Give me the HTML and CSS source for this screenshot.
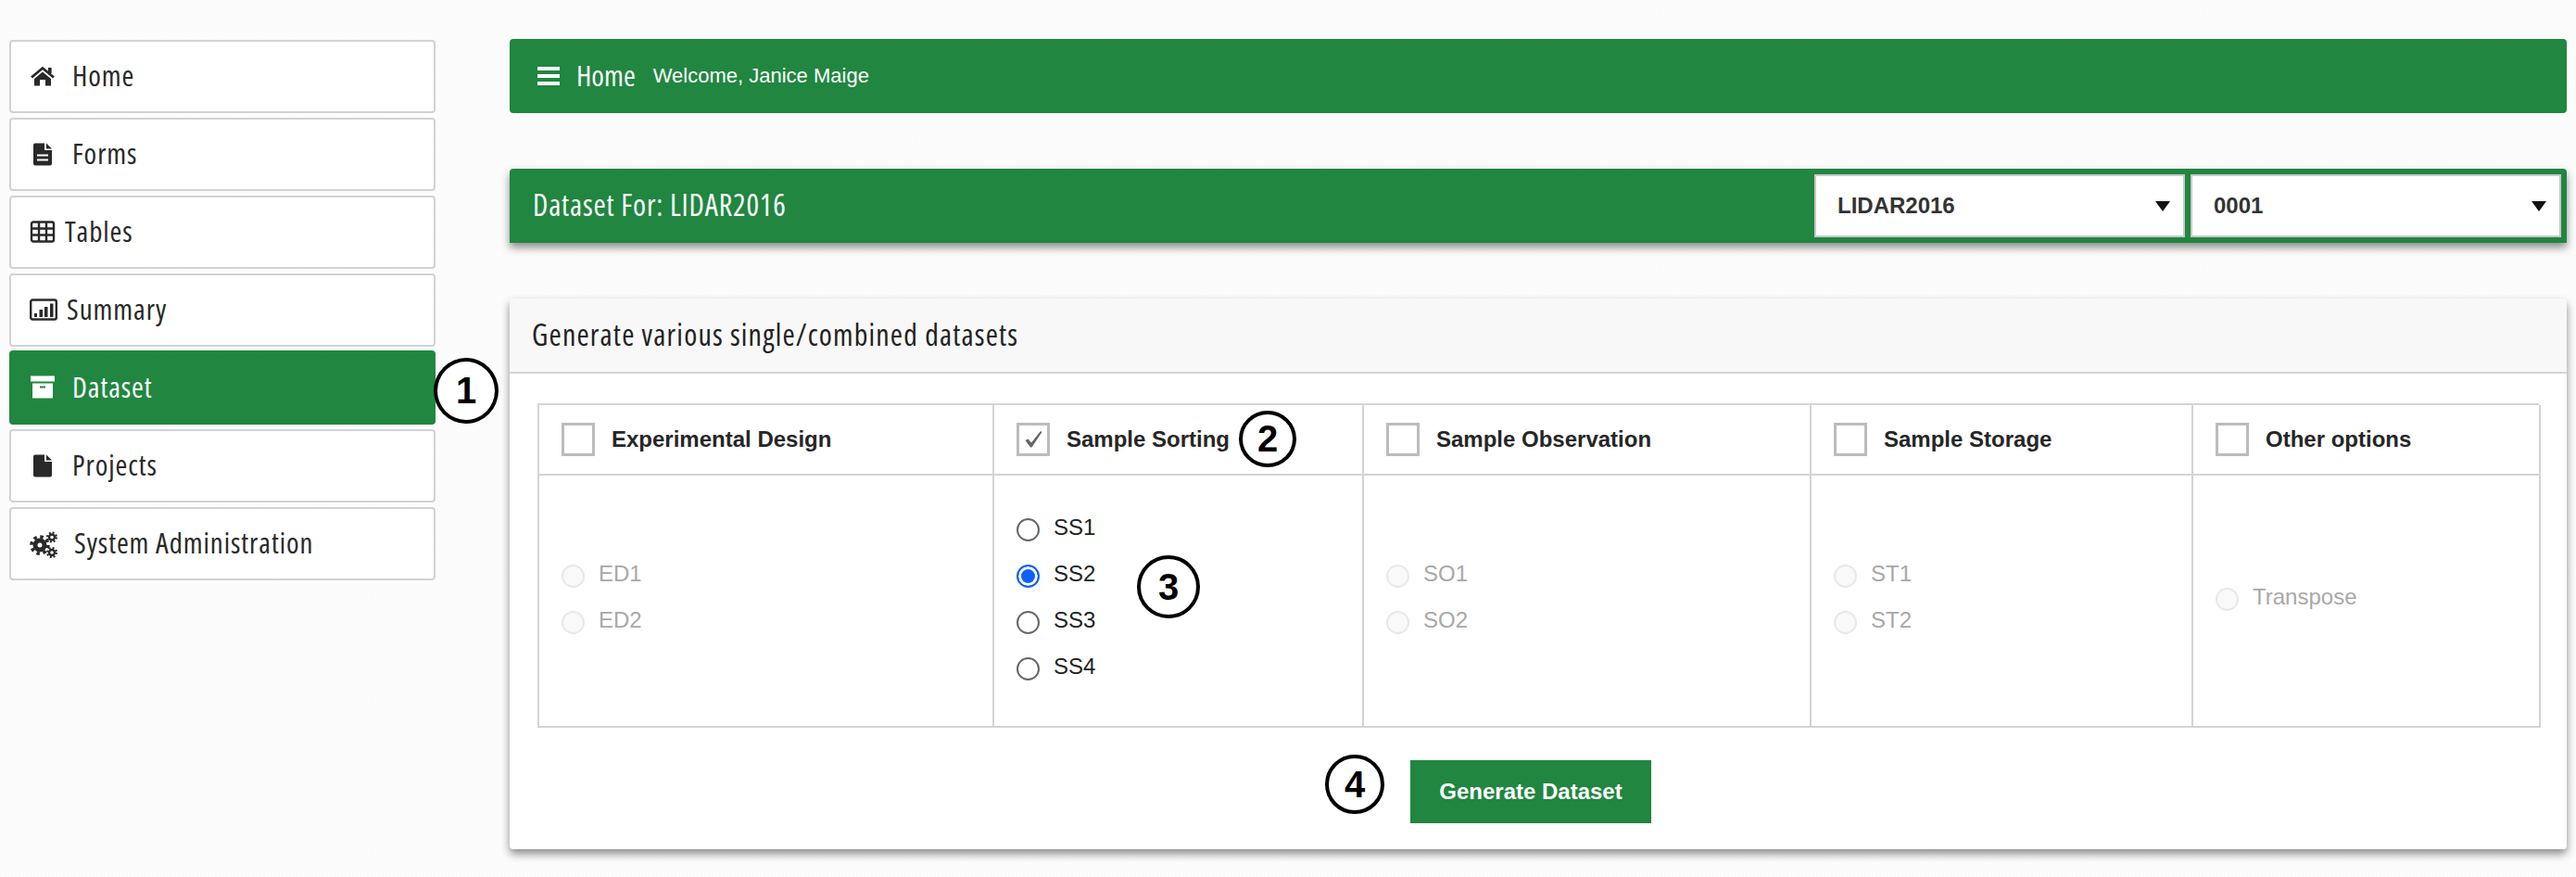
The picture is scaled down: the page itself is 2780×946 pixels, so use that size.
FILE: index.html
```html
<!DOCTYPE html>
<html lang="en">
<head>
<meta charset="utf-8">
<title>Dataset</title>
<link rel="stylesheet" href="styles.css">
</head>
<body>
<nav class="sidebar">
  <a class="nav-item"><svg class="ic w48" viewBox="0 0 48 32"><path class="line" d="M2 16.5L14 6.5 26 16.5"/><rect x="20" y="6" width="3.6" height="6"/><path d="M5 18L14 10.5 23 18V25.5H17V19H11V25.5H5Z"/></svg><span class="cond">Home</span></a>
  <a class="nav-item"><svg class="ic w48" viewBox="0 0 48 32"><path fill-rule="evenodd" d="M6 3.5H16V11H24V25.5A2 2 0 0 1 22 27.5H6A2 2 0 0 1 4 25.5V5.5A2 2 0 0 1 6 3.5ZM8 15.5V17.5H20V15.5ZM8 20.5V22.5H20V20.5Z"/><path d="M18 3.5L24 9.5H18Z"/></svg><span class="cond">Forms</span></a>
  <a class="nav-item"><svg class="ic w40" viewBox="0 0 40 32"><rect class="line thin" x="2" y="4.5" width="24" height="21" rx="2"/><path class="line thin" d="M10 4.5V25.5M18 4.5V25.5M2 11.5H26M2 18.5H26"/></svg><span class="cond">Tables</span></a>
  <a class="nav-item"><svg class="ic w42" viewBox="0 0 42 32"><rect class="line thin" x="1.2" y="4.5" width="27.6" height="21" rx="2"/><path d="M5 19H8V23H5ZM10.5 15H14V23H10.5ZM16 12H19.500V23H16ZM22 8.500H25.500V23H22Z"/></svg><span class="cond">Summary</span></a>
  <a class="nav-item active"><svg class="ic w48" viewBox="0 0 48 32"><rect class="light" x="1" y="3.500" width="26" height="6"/><path class="light" fill-rule="evenodd" d="M3 11.500H25V27.500H3ZM11 14.500V16.500H17V14.500Z"/></svg><span class="cond">Dataset</span></a>
  <a class="nav-item"><svg class="ic w48" viewBox="0 0 48 32"><path d="M6 3.500H16V11H24V25.500A2 2 0 0 1 22 27.500H6A2 2 0 0 1 4 25.500V5.500A2 2 0 0 1 6 3.500Z"/><path d="M18 3.500L24 9.500H18Z"/></svg><span class="cond">Projects</span></a>
  <a class="nav-item"><svg class="ic w50" viewBox="0 0 50 32"><circle class="line ring-l" cx="11" cy="17" r="5"/><circle class="line teeth-l" cx="11" cy="17" r="9"/><circle class="line ring-s" cx="24" cy="8.500" r="3"/><circle class="line teeth-s" cx="24" cy="8.500" r="5"/><circle class="line ring-s" cx="24" cy="25" r="3"/><circle class="line teeth-s" cx="24" cy="25" r="5"/></svg><span class="cond">System Administration</span></a>
</nav>

<main class="main">
  <header class="bar">
    <svg class="burger" viewBox="0 0 24 20"><path d="M0 0H24V4H0ZM0 8H24V12H0ZM0 16H24V20H0Z"/></svg>
    <span class="bar-title cond">Home</span>
    <span class="welcome">Welcome, Janice Maige</span>
  </header>

  <section class="bar bar-raised">
    <h1 class="bar-heading cond wide">Dataset For: LIDAR2016</h1>
    <div class="select"><span>LIDAR2016</span><svg class="caret" viewBox="0 0 16 11"><path d="M0 0H16L8 11Z"/></svg></div>
    <div class="select"><span>0001</span><svg class="caret" viewBox="0 0 16 11"><path d="M0 0H16L8 11Z"/></svg></div>
  </section>

  <section class="card">
    <h2 class="card-head cond wide">Generate various single/combined datasets</h2>
    <div class="card-body">
      <div class="options">
        <div class="cell head"><span class="box"></span><b>Experimental Design</b></div>
        <div class="cell head"><span class="box"><svg class="tick" viewBox="0 0 20 20"><path d="M1.500 11L4.500 9.500 8 13.500 18 1 19.500 2 8.500 18.500H7Z"/></svg></span><b>Sample Sorting</b></div>
        <div class="cell head"><span class="box"></span><b>Sample Observation</b></div>
        <div class="cell head"><span class="box"></span><b>Sample Storage</b></div>
        <div class="cell head"><span class="box"></span><b>Other options</b></div>

        <div class="cell radios off"><label><i class="radio"></i>ED1</label><label><i class="radio"></i>ED2</label></div>
        <div class="cell radios"><label><i class="radio"></i>SS1</label><label><i class="radio on"></i>SS2</label><label><i class="radio"></i>SS3</label><label><i class="radio"></i>SS4</label></div>
        <div class="cell radios off"><label><i class="radio"></i>SO1</label><label><i class="radio"></i>SO2</label></div>
        <div class="cell radios off"><label><i class="radio"></i>ST1</label><label><i class="radio"></i>ST2</label></div>
        <div class="cell radios off"><label><i class="radio"></i>Transpose</label></div>
      </div>
      <div class="actions"><button class="generate">Generate Dataset</button></div>
    </div>
  </section>
</main>

<span class="mark mark-1">1</span>
<span class="mark mark-2">2</span>
<span class="mark mark-3">3</span>
<span class="mark mark-4">4</span>
</body>
</html>
```

FILE: styles.css
```css
* { box-sizing: border-box; }
html, body { margin: 0; height: 946px; overflow: hidden; }
body {
  position: relative;
  display: flex;
  align-items: flex-start;
  padding-left: 10px;
  font-family: "Liberation Sans", Arial, sans-serif;
  color: #222;
  background: conic-gradient(#fdfdfd 25%, #fafafa 0 50%, #fdfdfd 0 75%, #fafafa 0) 0 0 / 4px 4px;
}
.cond { font-family: "Open Sans", sans-serif; font-stretch: 75%; padding-bottom: 3px; }
.wide { font-stretch: 80%; letter-spacing: .8px; }
.sidebar {
  flex: none;
  width: 460px;
  margin-top: 43px;
  display: flex;
  flex-direction: column;
  gap: 5px;
}
.nav-item {
  height: 79px;
  display: flex;
  align-items: center;
  padding-left: 20px;
  background: #fff;
  border: 2px solid #d2d2d2;
  border-radius: 4px;
  font-size: 31px;
  letter-spacing: .9px;
  color: #292929;
}
.nav-item.active { background: #208640; border-color: #208640; color: #fff; height: 80px; margin-top: -1px; }
.ic { flex: none; height: 32px; margin-right: -2px; fill: #292929; }
.w48 { width: 48px; }
.w40 { width: 40px; }
.w42 { width: 42px; }
.w50 { width: 50px; }
.line { fill: none; stroke: #292929; stroke-width: 2.8; }
.thin { stroke-width: 2.4; }
.light { fill: #fff; }
.ring-l { stroke-width: 5; }
.teeth-l { stroke-width: 3.6; stroke-dasharray: 3.5 3.57; }
.ring-s { stroke-width: 2.4; }
.teeth-s { stroke-width: 2; stroke-dasharray: 2 1.93; }

.main { flex: none; width: 2220px; margin-left: 80px; margin-top: 42px; }
.bar {
  height: 80px;
  display: flex;
  align-items: center;
  padding: 0 6px 0 30px;
  background: #208640;
  border-radius: 4px;
  color: #fff;
}
.burger { width: 24px; height: 20px; fill: #fff; margin-right: 18px; }
.bar-title { font-size: 31px; margin-right: 19px; }
.welcome { font-size: 22px; }
.bar-raised {
  margin-top: 60px;
  padding-left: 25px;
  gap: 6px;
  border-radius: 4px 4px 0 0;
  box-shadow: 0 5px 10px rgba(0, 0, 0, .45);
}
.bar-heading {
  margin: 0 auto 0 0;
  font-size: 32px;
  font-weight: 400;
}
.select {
  width: 400px;
  height: 68px;
  display: flex;
  align-items: center;
  justify-content: space-between;
  padding: 0 14px 0 23px;
  background: #fff;
  border: 2px solid #c8c8c8;
  color: #333;
  font-size: 24px;
  font-weight: 700;
}
.caret { width: 16px; height: 11px; fill: #111; }

.card {
  margin-top: 60px;
  height: 594px;
  background: #fff;
  border-radius: 4px;
  box-shadow: 0 5px 10px rgba(0, 0, 0, .45);
}
.card-head {
  height: 81px;
  margin: 0;
  padding: 0 24px 3px;
  display: flex;
  align-items: center;
  background: #f8f8f8;
  border-bottom: 2px solid #d6d6d6;
  border-radius: 4px 4px 0 0;
  font-size: 32px;
  font-weight: 400;
  letter-spacing: 1.15px;
}
.card-body { padding: 32px 30px 0; }
.options {
  display: grid;
  grid-template-columns: 491px 399px 483px 412px 375px;
  grid-template-rows: 76px 272px;
  border: solid #d4d4d4;
  border-width: 2px 0 0 2px;
}
.cell { border: solid #d4d4d4; border-width: 0 2px 2px 0; padding-left: 24px; }
.head { display: flex; align-items: center; gap: 18px; font-size: 24px; color: #262626; }
.box {
  flex: none;
  width: 36px;
  height: 36px;
  display: flex;
  align-items: center;
  justify-content: center;
  border: 3px solid #bcbcbc;
}
.tick { width: 20px; height: 20px; fill: #666; }
.radios { display: flex; flex-direction: column; justify-content: center; gap: 25px; padding-bottom: 4px; }
.radios label { display: flex; align-items: flex-start; gap: 15px; height: 25px; font-size: 24px; line-height: 19px; color: #222; }
.radio { flex: none; width: 25px; height: 25px; border: 2px solid #666; border-radius: 50%; background: #fff; }
.radio.on { border-color: #0d60fb; background: #0d60fb; box-shadow: inset 0 0 0 3px #fff; }
.off label { color: #a8a8a8; }
.off .radio { border-color: #e8e8e8; background: #f9f9f9; }
.actions { display: flex; justify-content: center; padding: 35px 16px 0 0; }
.generate {
  width: 260px;
  height: 68px;
  border: 0;
  background: #208640;
  color: #fff;
  font: 700 24px "Liberation Sans", Arial, sans-serif;
}

.mark {
  position: absolute;
  display: flex;
  align-items: center;
  justify-content: center;
  border: 4px solid #000;
  border-radius: 50%;
  background: #fff;
  color: #000;
  font-size: 40px;
  font-weight: 700;
}
.mark-1 { left: 468px; top: 386px; width: 70px; height: 71px; }
.mark-2 { left: 1337px; top: 443px; width: 62px; height: 61px; }
.mark-3 { left: 1227px; top: 599px; width: 68px; height: 68px; }
.mark-4 { left: 1430px; top: 814px; width: 64px; height: 64px; }
```
